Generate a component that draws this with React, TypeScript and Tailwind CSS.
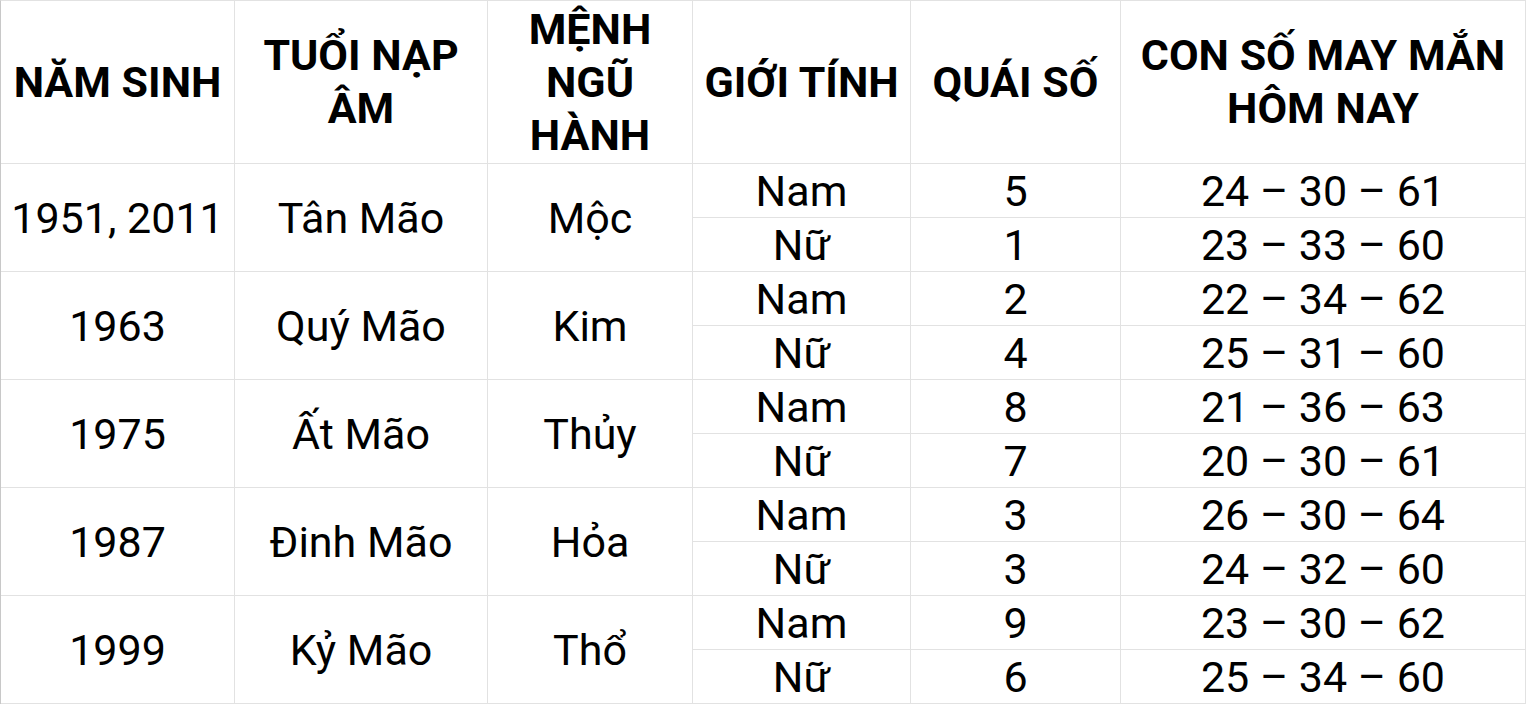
import React from "react";

type Group = {
  year: string;
  tuoi: string;
  menh: string;
  rows: { gender: string; quai: string; nums: string }[];
};

const groups: Group[] = [
  {
    year: "1951, 2011",
    tuoi: "Tân Mão",
    menh: "Mộc",
    rows: [
      { gender: "Nam", quai: "5", nums: "24 – 30 – 61" },
      { gender: "Nữ", quai: "1", nums: "23 – 33 – 60" },
    ],
  },
  {
    year: "1963",
    tuoi: "Quý Mão",
    menh: "Kim",
    rows: [
      { gender: "Nam", quai: "2", nums: "22 – 34 – 62" },
      { gender: "Nữ", quai: "4", nums: "25 – 31 – 60" },
    ],
  },
  {
    year: "1975",
    tuoi: "Ất Mão",
    menh: "Thủy",
    rows: [
      { gender: "Nam", quai: "8", nums: "21 – 36 – 63" },
      { gender: "Nữ", quai: "7", nums: "20 – 30 – 61" },
    ],
  },
  {
    year: "1987",
    tuoi: "Đinh Mão",
    menh: "Hỏa",
    rows: [
      { gender: "Nam", quai: "3", nums: "26 – 30 – 64" },
      { gender: "Nữ", quai: "3", nums: "24 – 32 – 60" },
    ],
  },
  {
    year: "1999",
    tuoi: "Kỷ Mão",
    menh: "Thổ",
    rows: [
      { gender: "Nam", quai: "9", nums: "23 – 30 – 62" },
      { gender: "Nữ", quai: "6", nums: "25 – 34 – 60" },
    ],
  },
];

const headers = [
  ["NĂM SINH"],
  ["TUỔI NẠP", "ÂM"],
  ["MỆNH", "NGŨ", "HÀNH"],
  ["GIỚI TÍNH"],
  ["QUÁI SỐ"],
  ["CON SỐ MAY MẮN", "HÔM NAY"],
];

const cell = "flex items-center justify-center text-center border-r border-b border-[#e2e2e2]";

const App = () => {
  return (
    <div className="w-[1527px] h-[706px] overflow-hidden bg-white text-black font-['Roboto',sans-serif]">
      <div className="grid grid-cols-[234px_253px_205px_218px_210px_405px] grid-rows-[163px_repeat(10,54px)] border-l border-t border-l-[#c8c8c8] border-t-[#e2e2e2] w-fit">
        {headers.map((lines, i) => (
          <div key={i} className={`${cell} flex-col font-bold text-[43px] leading-[53px]`}>
            {lines.map((l) => (
              <span key={l} className="whitespace-nowrap">{l}</span>
            ))}
          </div>
        ))}
        {groups.map((g) => (
          <React.Fragment key={g.year}>
            <div className={`${cell} row-span-2 text-[43px] pt-px`}>{g.year}</div>
            <div className={`${cell} row-span-2 text-[43px] pt-px`}>{g.tuoi}</div>
            <div className={`${cell} row-span-2 text-[43px] pt-px`}>{g.menh}</div>
            {g.rows.map((r) => (
              <React.Fragment key={r.gender}>
                <div className={`${cell} text-[43px] pt-px`}>{r.gender}</div>
                <div className={`${cell} text-[43px] pt-px`}>{r.quai}</div>
                <div className={`${cell} text-[43px] pt-px`}>{r.nums}</div>
              </React.Fragment>
            ))}
          </React.Fragment>
        ))}
      </div>
    </div>
  );
};

export default App;
